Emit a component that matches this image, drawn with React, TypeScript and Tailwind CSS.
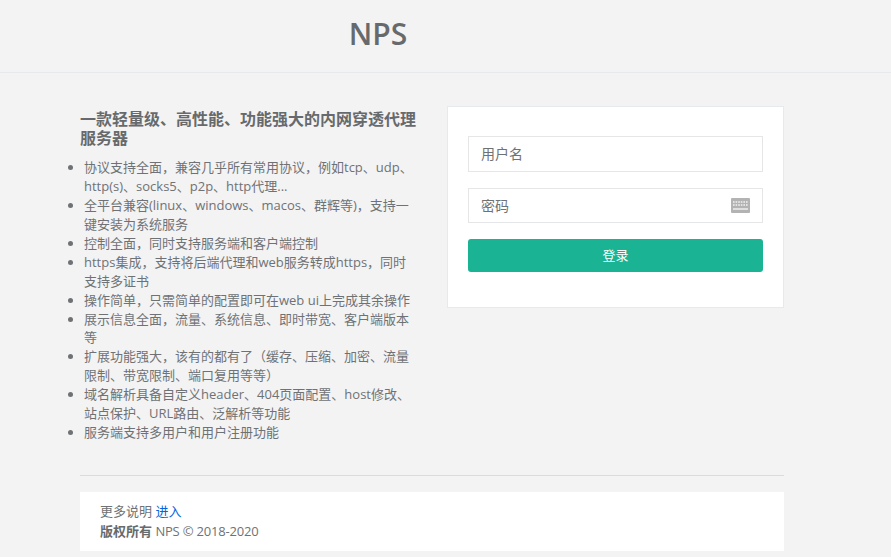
import React from 'react';

const features = [
  '协议支持全面，兼容几乎所有常用协议，例如tcp、udp、http(s)、socks5、p2p、http代理...',
  '全平台兼容(linux、windows、macos、群辉等)，支持一键安装为系统服务',
  '控制全面，同时支持服务端和客户端控制',
  'https集成，支持将后端代理和web服务转成https，同时支持多证书',
  '操作简单，只需简单的配置即可在web ui上完成其余操作',
  '展示信息全面，流量、系统信息、即时带宽、客户端版本等',
  '扩展功能强大，该有的都有了（缓存、压缩、加密、流量限制、带宽限制、端口复用等等）',
  '域名解析具备自定义header、404页面配置、host修改、站点保护、URL路由、泛解析等功能',
  '服务端支持多用户和用户注册功能',
];

function KeyboardIcon() {
  return (
    <svg width="19" height="15" viewBox="0 0 19 15" className="shrink-0">
      <rect width="19" height="15" rx="1" fill="#b3b3b3" />
      <path d="M2 4h15M2 7h15" stroke="#f2f2f2" strokeWidth="1.4" strokeDasharray="1.6 1" />
      <path d="M2 11h15" stroke="#f2f2f2" strokeWidth="1.4" />
    </svg>
  );
}

export default function App() {
  return (
    <div className="min-h-[557px] bg-[#f3f3f4] text-[13px] text-[#6f7274] font-['Open_Sans','Noto_Sans_CJK_SC',sans-serif] overflow-hidden">
      <header className="h-[73px] border-b border-[#e7eaec] flex items-center justify-center pr-[135px]">
        <h1 className="text-[30px] font-semibold leading-none pb-[5px] text-[#676a6c]">NPS</h1>
      </header>

      <main className="ml-[80px] w-[704px]">
        <div className="flex justify-between pt-[33px]">
          <div className="w-[337px] pt-[4px]">
            <h2 className="text-base font-semibold leading-[19px] text-[#676a6c]">一款轻量级、高性能、功能强大的内网穿透代理服务器</h2>
            <ul className="list-disc mt-[10px] ml-[4px] leading-[18.93px]">
              {features.map((f) => (
                <li key={f}>{f}</li>
              ))}
            </ul>
          </div>

          <div className="w-[337px] h-[202px] bg-white border border-[#e7eaec] px-5 pt-[29px]">
            <div className="h-[36px] border border-[#e5e6e7] px-3 pb-px flex items-center text-sm">用户名</div>
            <div className="h-[35px] mt-[16px] border border-[#e5e6e7] pl-3 pr-[12px] flex items-center justify-between text-sm">
              <span>密码</span>
              <KeyboardIcon />
            </div>
            <button className="w-full h-[33px] mt-[16px] rounded-[3px] bg-[#1ab394] text-white text-[13px]">登录</button>
          </div>
        </div>

        <div className="mt-[33px] border-t border-[#d9dbdc]" />
        <footer className="mt-4 h-[59px] bg-white px-5 pt-[9px] leading-[20px]">
          <div>更多说明 <a className="text-[#0066dd]">进入</a></div>
          <div><strong className="font-semibold text-[#676a6c]">版权所有</strong> <span className="tracking-[-0.2px]">NPS © 2018-2020</span></div>
        </footer>
      </main>
    </div>
  );
}
